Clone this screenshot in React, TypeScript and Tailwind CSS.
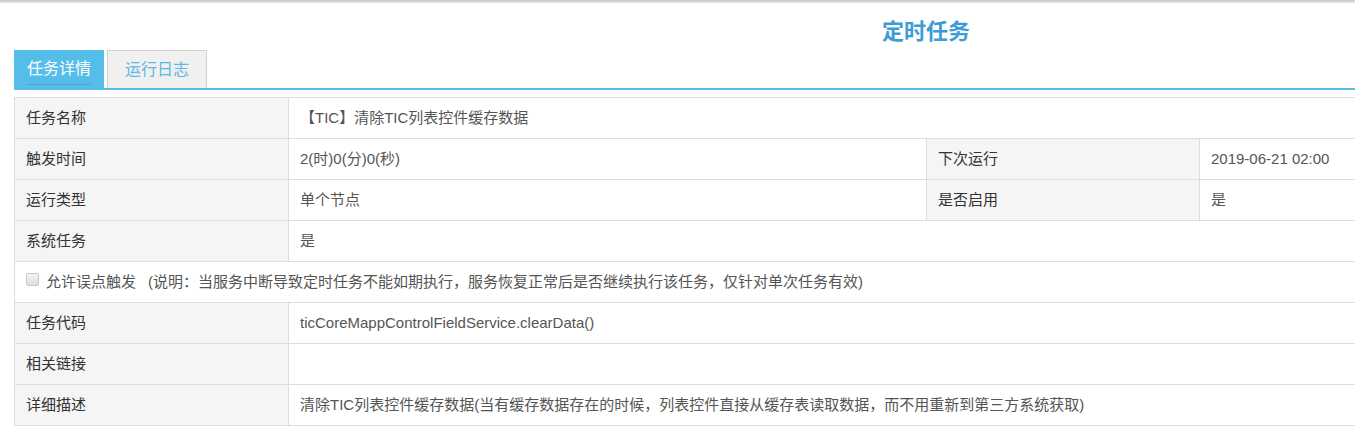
const font = { fontFamily: '"Liberation Sans", "Noto Sans CJK SC", sans-serif' };

type Cell = { label: string; value: string };

const rows: Cell[][] = [
  [{ label: "任务名称", value: "【TIC】清除TIC列表控件缓存数据" }],
  [
    { label: "触发时间", value: "2(时)0(分)0(秒)" },
    { label: "下次运行", value: "2019-06-21 02:00" },
  ],
  [
    { label: "运行类型", value: "单个节点" },
    { label: "是否启用", value: "是" },
  ],
  [{ label: "系统任务", value: "是" }],
];

const rowsBottom: Cell[] = [
  { label: "任务代码", value: "ticCoreMappControlFieldService.clearData()" },
  { label: "相关链接", value: "" },
  {
    label: "详细描述",
    value:
      "清除TIC列表控件缓存数据(当有缓存数据存在的时候，列表控件直接从缓存表读取数据，而不用重新到第三方系统获取)",
  },
];

function Row({ cells }: { cells: Cell[] }) {
  return (
    <tr className="h-[41px]">
      {cells.map((c, i) => (
        <Pair key={i} cell={c} span={cells.length === 1} />
      ))}
    </tr>
  );
}

function Pair({ cell, span }: { cell: Cell; span: boolean }) {
  return (
    <>
      <td className="border border-[#dddddd] bg-[#f5f5f5] pl-[11px] text-[#333333]">
        {cell.label}
      </td>
      <td
        colSpan={span ? 3 : 1}
        className="border border-[#dddddd] pl-[11px] text-[#555555]"
      >
        {cell.value}
      </td>
    </>
  );
}

export default function App() {
  return (
    <div className="min-h-screen w-full overflow-hidden bg-white" style={font}>
      <div className="h-[3px] bg-gradient-to-b from-[#c4c4c4] to-[#ececec]" />
      <div className="ml-[14px] w-[1824px]">
        <h1 className="mb-[3px] pt-[14px] text-center text-[22px] font-bold leading-[30px] text-[#3d9bd6]">
          定时任务
        </h1>

        <div className="flex h-[40px] items-end border-b-2 border-[#55bde9]">
          <div className="flex h-[38px] w-[90px] items-center justify-center bg-[#55bde9] text-[16px] text-white">
            <span className="border-b border-[#4aa9d6] pb-[2px] pt-[3px] leading-[26px]">任务详情</span>
          </div>
          <div className="ml-[3px] flex h-[38px] w-[100px] items-center justify-center border border-b-0 border-[#d0d0d0] bg-[#f0f0f0] text-[16px] text-[#5bb8e6]">
            运行日志
          </div>
        </div>

        <table className="mt-[7px] w-full table-fixed border-collapse text-[15px]">
          <colgroup>
            <col className="w-[274px]" />
            <col className="w-[638px]" />
            <col className="w-[273px]" />
            <col />
          </colgroup>
          <tbody>
            {rows.map((r, i) => (
              <Row key={i} cells={r} />
            ))}
            <tr className="h-[41px]">
              <td colSpan={4} className="border border-[#dddddd] pl-[11px] text-[#555555]">
                <div className="flex items-center">
                  <input
                    type="checkbox"
                    className="mb-[5px] h-[13px] w-[13px] appearance-none rounded-[2px] border border-[#c8c8c8] bg-gradient-to-b from-[#f4f4f4] to-[#dedede]"
                  />
                  <span className="ml-[7px]">允许误点触发</span>
                  <span className="ml-[12px]">
                    (说明：当服务中断导致定时任务不能如期执行，服务恢复正常后是否继续执行该任务，仅针对单次任务有效)
                  </span>
                </div>
              </td>
            </tr>
            {rowsBottom.map((c, i) => (
              <Row key={i} cells={[c]} />
            ))}
          </tbody>
        </table>
      </div>
    </div>
  );
}
